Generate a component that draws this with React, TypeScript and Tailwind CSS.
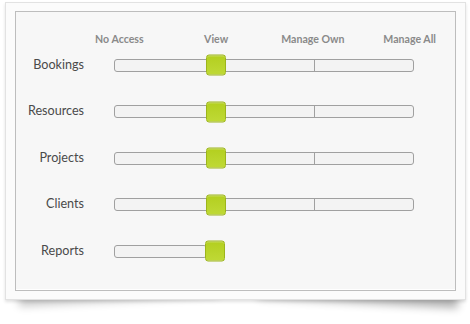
const positions = ["No Access", "View", "Manage Own", "Manage All"];

const rows = [
  { name: "Bookings", full: true },
  { name: "Resources", full: true },
  { name: "Projects", full: true },
  { name: "Clients", full: true },
  { name: "Reports", full: false },
];

function Thumb({ left }: { left: string }) {
  return (
    <div
      className={`absolute top-1/2 -translate-y-1/2 ${left} w-[20px] h-[21px] rounded-[3px] border border-[#9db51b] bg-gradient-to-b from-[#b3cf1e] to-[#bfd935] shadow-[inset_0_1px_0_rgba(255,255,255,0.25)]`}
    />
  );
}

function Slider({ full }: { full: boolean }) {
  if (!full) {
    return (
      <div className="relative w-[100px] h-[13px]">
        <div className="w-[93px] h-full rounded-[3px] border border-[#a0a0a0] bg-[#f3f3f3]" />
        <Thumb left="left-[91px]" />
      </div>
    );
  }
  return (
    <div className="relative w-[300px] h-[13px]">
      {/* track with divider at Manage Own */}
      <div className="flex w-full h-full rounded-[3px] border border-[#a0a0a0] bg-[#f3f3f3]">
        <div className="w-[200px] h-full border-r border-[#a0a0a0]" />
        <div className="flex-1" />
      </div>
      <Thumb left="left-[92px]" />
    </div>
  );
}

export default function App() {
  return (
    <div className="relative z-0 w-[470px] h-[324px] bg-white pt-[2px] pl-[5px] font-['Lato',sans-serif]">
      {/* Frame */}
      <div className="relative w-[461px] h-[298px] border border-[#e2e2e2] bg-[#fbfbfb] px-[9px] py-[8px] shadow-[0_2px_3px_rgba(0,0,0,0.12)]">
        {/* curled corner shadows */}
        <div className="absolute -z-10 left-[12px] bottom-[8px] w-[200px] h-[20px] -rotate-[3deg] shadow-[0_10px_9px_rgba(0,0,0,0.22)]" />
        <div className="absolute -z-10 right-[6px] bottom-[8px] w-[200px] h-[20px] rotate-[3deg] shadow-[0_12px_9px_rgba(0,0,0,0.3)]" />

        <div className="h-full border border-[#bdbdbd] bg-[#f7f7f7] shadow-[inset_0_-1px_0_#ffffff]">
          {/* Header */}
          <div className="grid grid-cols-4 w-[387px] ml-[55px] mt-[18px] h-[20px] items-center">
            {positions.map((p) => (
              <div key={p} className="text-center text-[10.6px] font-bold text-[#8a8a8a]">
                {p}
              </div>
            ))}
          </div>

          {/* Rows */}
          <div className="flex flex-col gap-[16.5px]">
            {rows.map((r) => (
              <div key={r.name} className="flex items-center h-[30px]">
                <div className="w-[68px] text-right text-[12.6px] text-[#4a4a4a]">{r.name}</div>
                <div className="ml-[30px]">
                  <Slider full={r.full} />
                </div>
              </div>
            ))}
          </div>
        </div>
      </div>
    </div>
  );
}
